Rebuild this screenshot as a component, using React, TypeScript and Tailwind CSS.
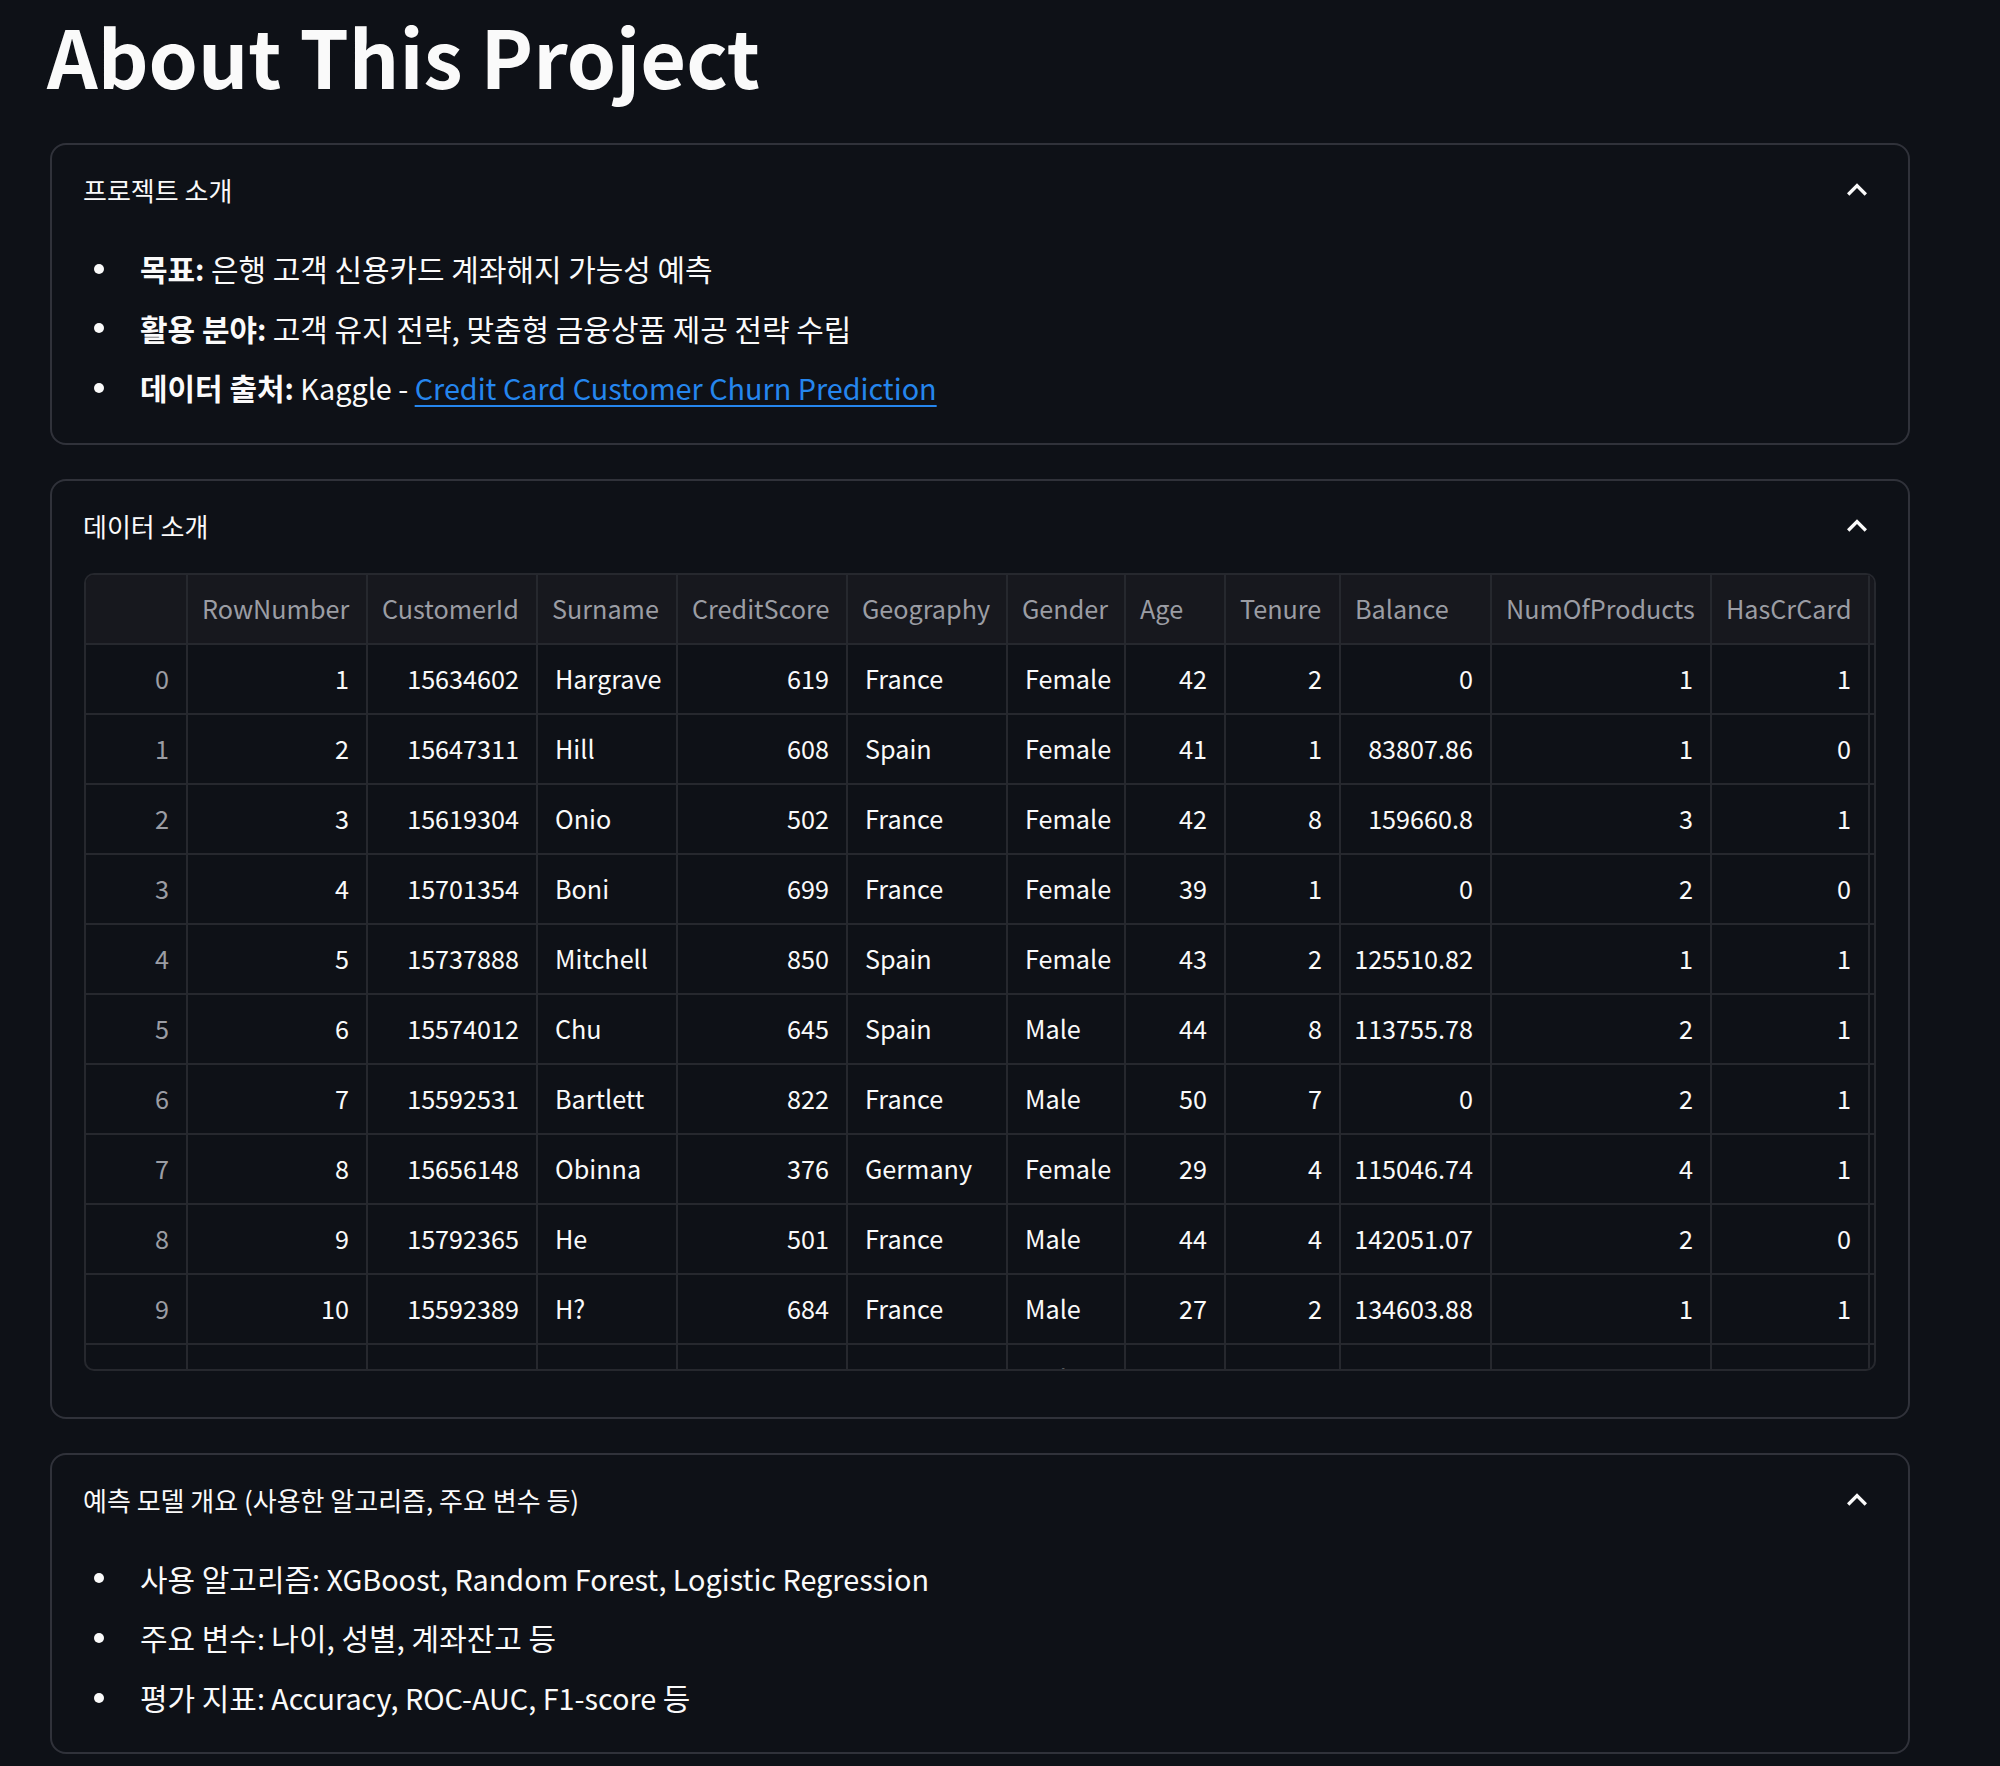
import type { ReactNode } from "react";

type Column = { label: string; width: string; numeric: boolean };

const columns: Column[] = [
  { label: "RowNumber", width: "w-[180px]", numeric: true },
  { label: "CustomerId", width: "w-[170px]", numeric: true },
  { label: "Surname", width: "w-[140px]", numeric: false },
  { label: "CreditScore", width: "w-[170px]", numeric: true },
  { label: "Geography", width: "w-[160px]", numeric: false },
  { label: "Gender", width: "w-[118px]", numeric: false },
  { label: "Age", width: "w-[100px]", numeric: true },
  { label: "Tenure", width: "w-[115px]", numeric: true },
  { label: "Balance", width: "w-[151px]", numeric: true },
  { label: "NumOfProducts", width: "w-[220px]", numeric: true },
  { label: "HasCrCard", width: "w-[158px]", numeric: true },
  { label: "IsActiveMember", width: "w-[200px]", numeric: true },
];

const rows: string[][] = [
  ["1", "15634602", "Hargrave", "619", "France", "Female", "42", "2", "0", "1", "1", "1"],
  ["2", "15647311", "Hill", "608", "Spain", "Female", "41", "1", "83807.86", "1", "0", "1"],
  ["3", "15619304", "Onio", "502", "France", "Female", "42", "8", "159660.8", "3", "1", "0"],
  ["4", "15701354", "Boni", "699", "France", "Female", "39", "1", "0", "2", "0", "0"],
  ["5", "15737888", "Mitchell", "850", "Spain", "Female", "43", "2", "125510.82", "1", "1", "1"],
  ["6", "15574012", "Chu", "645", "Spain", "Male", "44", "8", "113755.78", "2", "1", "0"],
  ["7", "15592531", "Bartlett", "822", "France", "Male", "50", "7", "0", "2", "1", "1"],
  ["8", "15656148", "Obinna", "376", "Germany", "Female", "29", "4", "115046.74", "4", "1", "0"],
  ["9", "15792365", "He", "501", "France", "Male", "44", "4", "142051.07", "2", "0", "1"],
  ["10", "15592389", "H?", "684", "France", "Male", "27", "2", "134603.88", "1", "1", "1"],
  ["11", "15767821", "Bearce", "528", "France", "Male", "31", "6", "102016.72", "2", "0", "0"],
];

// hangul in the original comes from a slightly larger fallback face
function K({ children }: { children: ReactNode }) {
  return <span className="text-[1.04em]">{children}</span>;
}

function Chevron() {
  return (
    <svg viewBox="0 0 24 24" className="h-[40px] w-[40px] fill-[#fafafa]">
      <path d="M12 8l-6 6 1.41 1.41L12 10.83l4.59 4.58L18 14z" />
    </svg>
  );
}

function Expander({
  title,
  children,
  bodyClass,
}: {
  title: ReactNode;
  children: ReactNode;
  bodyClass: string;
}) {
  return (
    <section className="rounded-2xl border-2 border-[#30323a]">
      <div className="flex h-[90px] items-center justify-between pl-[31px] pr-[31px] text-[25px] leading-[45px]">
        <span>{title}</span>
        <Chevron />
      </div>
      <div className={bodyClass}>{children}</div>
    </section>
  );
}

function Bullets({ items }: { items: ReactNode[] }) {
  return (
    <ul className="flex flex-col gap-[8.5px] pt-[8px] text-[28.8px] leading-[51.2px]">
      {items.map((item, i) => (
        <li key={i} className="flex items-center">
          <span className="ml-[11px] mr-[36px] h-[10px] w-[10px] shrink-0 rounded-full bg-[#fafafa]" />
          <span>{item}</span>
        </li>
      ))}
    </ul>
  );
}

function DataTable() {
  return (
    <div className="h-[798px] w-[1792px] overflow-hidden rounded-[10px] border-2 border-[#26282e] text-[25.2px]">
      <div className="flex bg-[#17181e] text-[#9b9da4]">
        <div className="h-[70px] w-[102px] shrink-0 border-b-2 border-r-2 border-[#26282e]" />
        {columns.map((c) => (
          <div
            key={c.label}
            className={`flex h-[70px] shrink-0 items-center whitespace-nowrap border-b-2 border-r-2 border-[#26282e] px-[14px] ${c.width}`}
          >
            {c.label}
          </div>
        ))}
      </div>
      {rows.map((r, i) => (
        <div key={i} className="flex">
          <div className="flex h-[70px] w-[102px] shrink-0 items-center justify-end border-b-2 border-r-2 border-[#26282e] px-[17px] text-[#9b9da4]">
            {i}
          </div>
          {r.map((v, j) => (
            <div
              key={j}
              className={`flex h-[70px] shrink-0 items-center whitespace-nowrap border-b-2 border-r-2 border-[#26282e] px-[17px] ${columns[j].width} ${
                columns[j].numeric ? "justify-end" : "justify-start"
              }`}
            >
              {v}
            </div>
          ))}
        </div>
      ))}
    </div>
  );
}

export default function App() {
  return (
    <div className="min-h-screen w-[2000px] bg-[#0e1117] pb-[12px] pl-[50px] font-['Noto_Sans_CJK_KR',sans-serif] text-[#fafafa]">
      <h1 className="-ml-[3px] pt-[7px] text-[79px] font-bold leading-[95px]">About This Project</h1>
      <div className="mt-[41px] flex w-[1860px] flex-col gap-[34px]">
        <Expander title={<K>프로젝트 소개</K>} bodyClass="px-[31px] pb-[29px]">
          <Bullets
            items={[
              <>
                <b className="font-bold">
                  <K>목표</K>:
                </b>{" "}
                <K>은행 고객 신용카드 계좌해지 가능성 예측</K>
              </>,
              <>
                <b className="font-bold">
                  <K>활용 분야</K>:
                </b>{" "}
                <K>고객 유지 전략, 맞춤형 금융상품 제공 전략 수립</K>
              </>,
              <>
                <b className="font-bold">
                  <K>데이터 출처</K>:
                </b>{" "}
                Kaggle -{" "}
                <a href="#" className="text-[#2586ee] underline decoration-2 underline-offset-[5px]">
                  Credit Card Customer Churn Prediction
                </a>
              </>,
            ]}
          />
        </Expander>

        <Expander title={<K>데이터 소개</K>} bodyClass="px-[32px] pt-[2px] pb-[46px]">
          <DataTable />
        </Expander>

        <Expander title={<K>예측 모델 개요 (사용한 알고리즘, 주요 변수 등)</K>} bodyClass="px-[31px] pb-[29px]">
          <Bullets
            items={[
              <>
                <K>사용 알고리즘</K>: XGBoost, Random Forest, Logistic Regression
              </>,
              <>
                <K>주요 변수</K>: <K>나이, 성별, 계좌잔고 등</K>
              </>,
              <>
                <K>평가 지표</K>: Accuracy, ROC-AUC, F1-score <K>등</K>
              </>,
            ]}
          />
        </Expander>
      </div>
    </div>
  );
}
